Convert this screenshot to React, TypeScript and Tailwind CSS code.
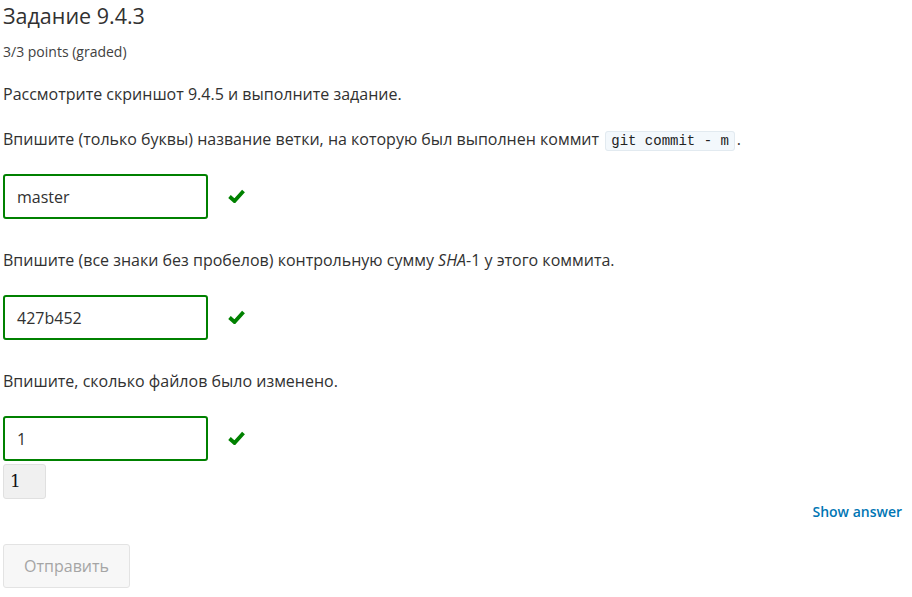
function Answer({ value }: { value: string }) {
  return (
    <div className="flex items-center">
      <div className="w-[205px] h-[45px] border-2 border-[#008100] rounded-[3px] bg-white flex items-center px-[12px] text-[16px] text-[#313131]">
        {value}
      </div>
      <svg className="ml-[20px] mt-[-2px]" width="17" height="14" viewBox="0 0 17 14">
        <path d="M1.5 7.5 L6.5 12 L15.5 2" fill="none" stroke="#008100" strokeWidth="3.8" strokeLinecap="butt" strokeLinejoin="miter" />
      </svg>
    </div>
  );
}

export default function App() {
  return (
    <div className="w-[912px] h-[597px] bg-white px-[3px] text-[#313131] font-['Open_Sans',sans-serif] overflow-hidden">
      <h2 className="text-[21.5px] leading-[24px] pt-[4px] text-[#313131]">Задание 9.4.3</h2>
      <div className="text-[14px] leading-[16px] mt-[16px] text-[#414141]">3/3 points (graded)</div>

      <p className="text-[16px] leading-[20px] mt-[24px]">Рассмотрите скриншот 9.4.5 и выполните задание.</p>
      <p className="text-[16px] leading-[20px] mt-[25px]">
        Впишите (только буквы) название ветки, на которую был выполнен коммит{" "}
        <code className="font-['Liberation_Mono',monospace] text-[14px] leading-[18px] text-[#222] bg-[#f3f8fc] border border-[#e2eaf0] rounded-[3px] px-[5px] py-[1px] mx-[2px]">
          git commit - m
        </code>
        .
      </p>

      <div className="mt-[24px]">
        <Answer value="master" />
      </div>

      <p className="text-[16px] leading-[20px] mt-[31px]">
        Впишите (все знаки без пробелов) контрольную сумму <i>SHA</i>-1 у этого коммита.
      </p>
      <div className="mt-[25px]">
        <Answer value="427b452" />
      </div>

      <p className="text-[16px] leading-[20px] mt-[31px]">Впишите, сколько файлов было изменено.</p>
      <div className="mt-[25px]">
        <Answer value="1" />
      </div>
      <div className="mt-[3px] w-[43px] h-[35px] bg-[#f0f0f0] border border-[#e0e0e0] rounded-[3px] flex items-center px-[6px] font-['DejaVu_Serif',serif] text-[17px] text-[#111]">
        1
      </div>

      <div className="flex justify-end mt-[2px] pr-[7px]">
        <button className="text-[14px] font-semibold text-[#0075b4]">Show answer</button>
      </div>

      <button className="mt-[22px] w-[127px] h-[44px] border border-[#e3e3e3] rounded-[3px] bg-[#f7f7f7] text-[16px] text-[#a5a5a5]">
        Отправить
      </button>
    </div>
  );
}
